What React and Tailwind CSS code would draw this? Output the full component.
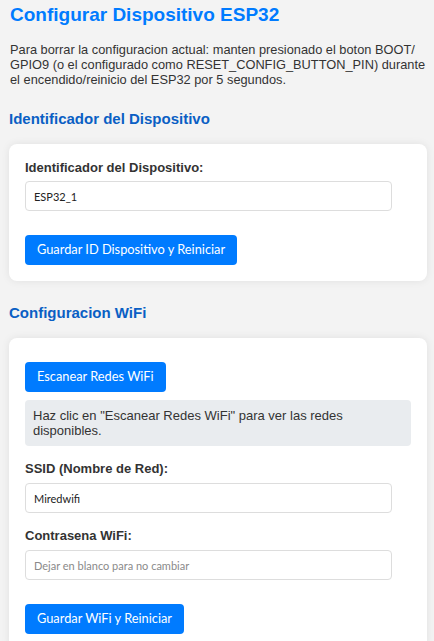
import { useState } from 'react';

const btn =
  "h-[30px] rounded-[4px] bg-[#007bff] px-3 text-[12.8px] text-white font-['Lato',sans-serif]";
const input =
  "block h-[30px] w-[95%] rounded-[4px] border border-[#dddddd] bg-white px-2 text-[11px] text-[#222] outline-none placeholder:text-[#8a8a8a] font-['Lato',sans-serif]";
const label = 'block text-[13px] font-bold leading-[16px] text-[#333]';

function Section({ title, children }) {
  return (
    <section className="mt-[23px]">
      <h2 className="text-[15px] font-bold leading-[18px] text-[#0a5fc4]">{title}</h2>
      <div className="mt-[16px] rounded-[8px] bg-white px-4 pt-4 pb-4 shadow-[0_0_8px_rgba(0,0,0,0.08)]">{children}</div>
    </section>
  );
}

export default function App() {
  const [deviceId, setDeviceId] = useState('ESP32_1');
  const [ssid, setSsid] = useState('Miredwifi');
  const [pass, setPass] = useState('');

  return (
    <div className="min-h-screen bg-[#f3f3f3] pl-[9px] pr-[7px] pt-[4px] pb-6 font-['Liberation_Sans',Arial,sans-serif] text-[#333]">
      <h1 className="pl-px text-[19px] font-bold leading-[22px] text-[#007bff]">Configurar Dispositivo ESP32</h1>
      <p className="mt-[16px] pl-px text-[12.8px] leading-[15px] text-[#333]">
        Para borrar la configuracion actual: manten presionado el boton BOOT/<wbr />GPIO9 (o el configurado como RESET_CONFIG_BUTTON_PIN) durante el encendido/reinicio del ESP32 por 5 segundos.
      </p>

      <Section title="Identificador del Dispositivo">
        <label className={label}>Identificador del Dispositivo:</label>
        <input className={`${input} mt-[5px]`} value={deviceId} onChange={(e) => setDeviceId(e.target.value)} />
        <button className={`${btn} mt-6`}>Guardar ID Dispositivo y Reiniciar</button>
      </Section>

      <Section title="Configuracion WiFi">
        <button className={`${btn} mt-2`}>Escanear Redes WiFi</button>
        <div className="mt-2 rounded-[4px] bg-[#e9ecef] p-2 text-[13px] leading-[15px] text-[#333]">
          Haz clic en "Escanear Redes WiFi" para ver las redes disponibles.
        </div>
        <label className={`${label} mt-[15px]`}>SSID (Nombre de Red):</label>
        <input className={`${input} mt-[6px]`} value={ssid} onChange={(e) => setSsid(e.target.value)} />
        <label className={`${label} mt-[15px]`}>Contrasena WiFi:</label>
        <input
          type="password"
          className={`${input} mt-[6px]`}
          placeholder="Dejar en blanco para no cambiar"
          value={pass}
          onChange={(e) => setPass(e.target.value)}
        />
        <button className={`${btn} mt-6`}>Guardar WiFi y Reiniciar</button>
      </Section>
    </div>
  );
}
